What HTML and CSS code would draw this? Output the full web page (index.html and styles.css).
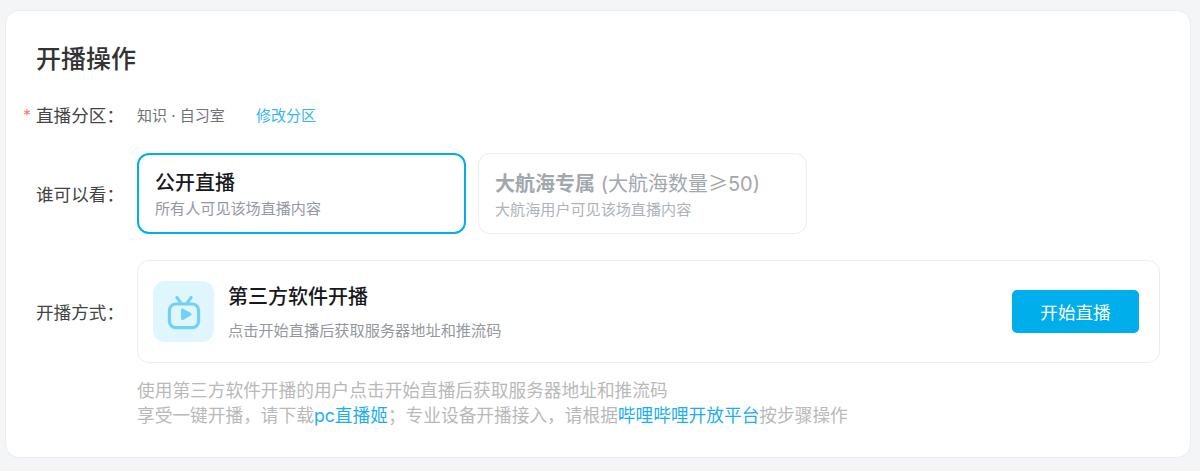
FILE: index.html
```html
<!DOCTYPE html>
<html>

<head>
    <meta charset="utf-8">
    <title>开播操作</title>
    <link rel="stylesheet" href="styles.css">
</head>

<body>
    <div class="panel">
        <h2 class="panel-title">开播操作</h2>

        <div class="row row-area">
            <div class="label"><span class="star">*</span>直播分区：</div>
            <div class="area-name">知识 · 自习室</div>
            <a class="area-edit">修改分区</a>
        </div>

        <div class="row row-who">
            <div class="label">谁可以看：</div>
            <div class="who-list">
                <div class="who-item active">
                    <div class="who-title">公开直播</div>
                    <div class="who-desc">所有人可见该场直播内容</div>
                </div>
                <div class="who-item disabled">
                    <div class="who-title"><b>大航海专属</b> (大航海数量<span class="cjk">≥</span>50)</div>
                    <div class="who-desc">大航海用户可见该场直播内容</div>
                </div>
            </div>
        </div>

        <div class="row row-way">
            <div class="label">开播方式：</div>
            <div class="way-box">
                <div class="way-icon">
                    <svg width="36" height="36" viewBox="0 0 36 36" fill="none">
                        <path d="M10.8 3.4L14.6 8.5M25.2 3.4L21.4 8.5" stroke="#73d1f8" stroke-width="3" stroke-linecap="round"/>
                        <rect x="3.4" y="10" width="29.2" height="23.7" rx="6.5" stroke="#73d1f8" stroke-width="3.2"/>
                        <path d="M15 16c0-1.2 1.2-1.9 2.2-1.3l7.6 4.3c1 .6 1 2 0 2.6l-7.6 4.3c-1 .6-2.2-.1-2.2-1.3z" fill="#73d1f8"/>
                    </svg>
                </div>
                <div class="way-text">
                    <div class="way-title">第三方软件开播</div>
                    <div class="way-desc">点击开始直播后获取服务器地址和推流码</div>
                </div>
                <button class="start-btn">开始直播</button>
            </div>
        </div>

        <div class="notes">
            使用第三方软件开播的用户点击开始直播后获取服务器地址和推流码<br>
            享受一键开播，请下载<a>pc直播姬</a>；专业设备开播接入，请根据<a>哔哩哔哩开放平台</a>按步骤操作
        </div>
    </div>
</body>

</html>
```

FILE: styles.css
```css
* {
    box-sizing: border-box;
}

html,
body {
    margin: 0;
    padding: 0;
}

body {
    height: 471px;
    overflow: hidden;
    padding: 10px 9px 0 5px;
    background: #f4f5f7;
    font-family: Inter, "Noto Sans CJK SC", sans-serif;
}

.panel {
    height: 448px;
    padding: 32px 30px 0 30px;
    background: #fff;
    border: 1px solid #ebedf0;
    border-radius: 14px;
}

.panel-title {
    margin: 0;
    font-size: 25px;
    line-height: 32px;
    font-weight: 500;
    color: #333;
}

.row {
    display: flex;
}

.label {
    position: relative;
    flex: none;
    width: 101px;
    padding-top: 2px;
    font-size: 17.6px;
    line-height: 24px;
    color: #444;
}

.star {
    position: absolute;
    left: -13px;
    top: 3px;
    color: #ff7a5c;
    font-size: 16px;
}

.row-area {
    margin-top: 27px;
    align-items: center;
    height: 24px;
}

.row-area .label {
    padding-top: 4px;
}

.area-name {
    width: 119px;
    font-size: 15px;
    color: #6d7278;
}

.area-edit {
    font-size: 15px;
    color: #36b4ee;
}

.row-who {
    margin-top: 27px;
    align-items: center;
}

.who-list {
    display: flex;
    gap: 12px;
}

.who-item {
    width: 329px;
    height: 81px;
    padding: 15px 16px 0 16px;
    border: 1px solid #ebedf0;
    border-radius: 12px;
}

.who-item.active {
    padding: 14px 15px 0 16px;
    border: 2px solid #00aeec;
}

.who-title {
    font-size: 20px;
    line-height: 28px;
    font-weight: 500;
    color: #18191c;
}

.who-desc {
    margin-top: 1px;
    font-size: 15.1px;
    line-height: 22px;
    color: #9499a0;
}

.disabled .who-title {
    font-weight: 400;
    color: #a2a7ae;
}

.disabled .who-title b {
    font-weight: 700;
}

.disabled .who-desc {
    color: #aeb3b9;
}

.cjk {
    font-family: "Noto Sans CJK SC", sans-serif;
}

.row-way {
    margin-top: 26px;
    align-items: center;
}

.way-box {
    flex: 1;
    display: flex;
    align-items: center;
    height: 103px;
    padding: 0 20px 0 15px;
    border: 1px solid #ebedf0;
    border-radius: 12px;
}

.way-icon {
    flex: none;
    display: flex;
    align-items: center;
    justify-content: center;
    width: 61px;
    height: 61px;
    background: #dff6fd;
    border-radius: 12px;
}

.way-text {
    flex: 1;
    margin-left: 14px;
    padding-top: 2px;
}

.way-title {
    font-size: 20px;
    line-height: 28px;
    font-weight: 500;
    color: #18191c;
}

.way-desc {
    margin-top: 9px;
    font-size: 15.2px;
    line-height: 22px;
    color: #9499a0;
}

.start-btn {
    flex: none;
    width: 127px;
    height: 43px;
    padding: 0;
    background: #00aeec;
    border: 0;
    border-radius: 5px;
    color: #fff;
    font-family: inherit;
    font-size: 17.6px;
}

.notes {
    margin: 15px 0 0 101px;
    font-size: 17.7px;
    line-height: 25px;
    color: #b9b9b9;
}

.notes a {
    color: #1eaef0;
}
```
